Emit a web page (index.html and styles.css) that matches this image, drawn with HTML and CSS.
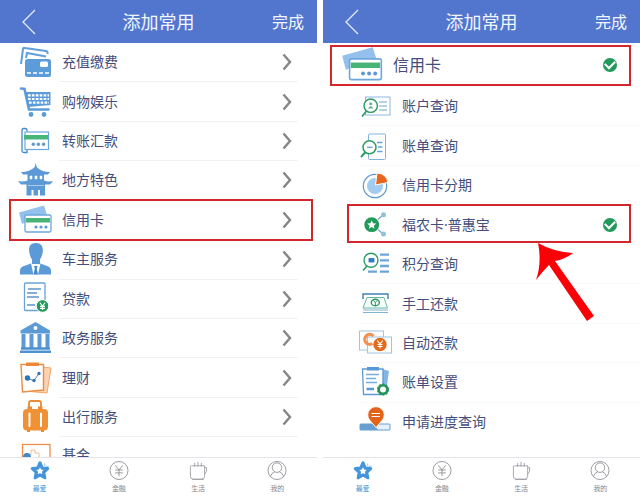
FILE: index.html
```
<!DOCTYPE html>
<html lang="zh-CN">
  <head>
    <meta charset="UTF-8" />
    <meta name="viewport" content="width=device-width, initial-scale=1.0" />
    <title>添加常用</title>
    <link rel="stylesheet" href="styles.css">
  </head>
  <body>
    <!-- shared icons -->
    <svg class="sprite" aria-hidden="true">
      <symbol id="card" viewBox="0 0 36 36">
        <path d="M1 10.500L26 3.500L29 13L6 21L4 22Z" fill="#93c0ec" />
        <rect x="7" y="13" width="26" height="17" rx="1.500" fill="#fff" stroke="#6ba6dc" stroke-width="1.300" />
        <path d="M8 16H32V20.500H8Z" fill="#48b377" />
        <g fill="#5b98d2"><circle cx="18" cy="25" r="1.600" /><circle cx="23" cy="25" r="1.600" /><circle cx="28" cy="25" r="1.600" /></g>
      </symbol>
      <symbol id="back" viewBox="0 0 14 26">
        <path d="M13 1L1 13L13 25" fill="none" stroke="#e4ecff" stroke-width="1.300" />
      </symbol>
      <symbol id="chevron" viewBox="0 0 10 18">
        <path d="M1.500 1.500L8 9L1.500 16.500" fill="none" stroke="#858585" stroke-width="2.400" />
      </symbol>
      <symbol id="star" viewBox="0 0 20 20">
        <path d="M10 2L12.300 7.400L18 8L13.800 11.900L15 17.600L10 14.700L5 17.600L6.200 11.900L2 8L7.700 7.400Z" fill="#fff" stroke="#4495db" stroke-width="3.400" stroke-linejoin="round" />
        <path d="M15 2.500V5.500M16.500 5.500H19" stroke="#8bbce8" />
      </symbol>
      <symbol id="yuan" viewBox="0 0 20 20">
        <g fill="none" stroke="#8b8b8f" stroke-width="0.900"><circle cx="10" cy="10" r="9.500" /><path d="M6 4.500L10 9.500L14 4.500M10 9.500V16M6 9.500H14M6 12.500H14" /></g>
      </symbol>
      <symbol id="cup" viewBox="0 0 20 20">
        <g fill="none" stroke="#9a9aa2" stroke-width="0.900"><path d="M3 5H17V16Q17 19 14 19H5Q2 19 2 16V6Q2 5 3 5ZM17 7H19Q20 11 17 14M4 19.500H16M6.500 2V6M10 1V6M13.500 2V6" /></g>
      </symbol>
      <symbol id="user" viewBox="0 0 20 20">
        <g fill="none" stroke="#8d8d94" stroke-width="0.900"><circle cx="10" cy="10" r="9.500" /><circle cx="10" cy="7" r="5" /><path d="M3 16.500Q4.500 12 7.500 11.500M12.500 11.500Q15.500 12 17 16.500" /></g>
      </symbol>
    </svg>

    <section class="phone">
      <header class="topbar">
        <button class="back" aria-label="返回"><svg><use href="#back" /></svg></button>
        <h1>添加常用</h1>
        <button class="done">完成</button>
      </header>
      <ul class="menu">
        <li><button class="row">
          <svg class="icon" viewBox="0 0 36 36">
            <path d="M3 20L5 5Q5.500 3.500 7 4L28 7Q30 7.500 29.500 10M8 14L9 9L28 12.500" fill="none" stroke="#5fa0da" stroke-width="2" />
            <rect x="7" y="15" width="26" height="18" rx="2.500" fill="#5c9dd9" />
            <rect x="22" y="17.500" width="8" height="5.500" rx="1.500" fill="#fff" />
            <path d="M9 29H32" stroke="#fff" stroke-width="1.500" stroke-dasharray="4 2" />
          </svg>
          <span>充值缴费</span><svg class="chevron"><use href="#chevron" /></svg>
        </button></li>
        <li><button class="row">
          <svg class="icon" viewBox="0 0 36 36">
            <path d="M3 4.500L6.500 5L11 25.500H30.500" fill="none" stroke="#5c9dd9" stroke-width="2.600" stroke-linecap="round" />
            <path d="M7 8H32.500V21L10 23Z" fill="#5c9dd9" />
            <path d="M10 11.300H31M10 15H31M11 18.700H31" stroke="#fff" stroke-width="2.200" stroke-dasharray="2.600 1.300" />
            <circle cx="13" cy="30.500" r="2.400" fill="#5c9dd9" /><circle cx="26" cy="30.500" r="2.400" fill="#5c9dd9" />
          </svg>
          <span>购物娱乐</span><svg class="chevron"><use href="#chevron" /></svg>
        </button></li>
        <li><button class="row">
          <svg class="icon" viewBox="0 0 36 36">
            <rect x="7" y="9" width="23.500" height="17.500" fill="#fff" stroke="#6aa7dc" stroke-width="1.200" />
            <path d="M6 12H30V16.500H6Z" fill="#49b57a" />
            <path d="M9 8.500V7Q9 5.500 7 5.500H5.500Q4 5.500 4 7V28Q4 29.500 6 29.500H9V27" fill="none" stroke="#4389ca" stroke-width="1.300" />
            <g fill="#6298cc"><circle cx="15.300" cy="21.300" r="1.700" /><circle cx="20.300" cy="21.300" r="1.700" /><circle cx="25.600" cy="21.300" r="1.700" /></g>
          </svg>
          <span>转账汇款</span><svg class="chevron"><use href="#chevron" /></svg>
        </button></li>
        <li><button class="row">
          <svg class="icon" viewBox="0 0 36 36">
            <path d="M17.700 1L18.700 5Q23 10 32 10L30 12.500H26V18.500Q30 20 35 19L32 22.500H27V33.500H22V28H20V33.500H15.500V28H13.500V33.500H8.500V22.500H3L0 19Q5 20 9.500 18.500V12.500H5L3 10Q12 10 16.700 5Z" fill="#5b9ad6" />
            <path d="M12 14H14V17H12ZM17 14H19V17H17ZM22 14H24V17H22ZM10 23.500H26" fill="#fff" stroke="#fff" stroke-width="0.500" />
          </svg>
          <span>地方特色</span><svg class="chevron"><use href="#chevron" /></svg>
        </button></li>
        <li class="marked"><button class="row">
          <svg class="icon"><use href="#card" /></svg>
          <span>信用卡</span><svg class="chevron"><use href="#chevron" /></svg>
        </button></li>
        <li><button class="row">
          <svg class="icon" viewBox="0 0 36 36">
            <path d="M18 2C12 2 10.500 6 11.300 11Q12 16 14 18.500V23H22V18.500Q24 16 24.700 11C25.500 6 23.500 2 18 2Z" fill="#5b9ad6" />
            <path d="M2 33.500V30Q2 26 6 25L13 22.500L17.500 27L22.500 22.500L29 25Q33 26 33 30V33.500Z" fill="#5b9ad6" />
            <path d="M13 22.500L15.500 33.500H20L22.500 22.500L18 26Z" fill="#fff" />
            <path d="M16 25H19.500L18.800 27.500L20 33.500H15.500L16.800 27.500Z" fill="#4589cb" />
          </svg>
          <span>车主服务</span><svg class="chevron"><use href="#chevron" /></svg>
        </button></li>
        <li><button class="row">
          <svg class="icon" viewBox="0 0 36 36">
            <rect x="6.500" y="2" width="20.500" height="27.500" rx="1" fill="#fff" stroke="#6ba3d8" stroke-width="1.300" />
            <path d="M10 8H23M9 12H19M9 16H21M9 24H17" stroke="#5d94cd" stroke-width="1.300" />
            <circle cx="24.500" cy="25" r="6.300" fill="#229b5b" stroke="#fff" />
            <path d="M21.800 21.500L24.500 25L27.200 21.500M24.500 25V29M22 25.300H27M22 27.300H27" fill="none" stroke="#fff" stroke-width="1.200" />
          </svg>
          <span>贷款</span><svg class="chevron"><use href="#chevron" /></svg>
        </button></li>
        <li><button class="row">
          <svg class="icon" viewBox="0 0 36 36">
            <path d="M17.500 2L32 10.500V13.500H2.500V10.500Z" fill="#5b9ad6" />
            <circle cx="17.500" cy="8" r="2" fill="#fff" />
            <path d="M5.500 14V28M13.500 14V28M21.500 14V28M29.500 14V28" stroke="#5b9ad6" stroke-width="4" />
            <path d="M3 28.500H32M2 31.800H33" stroke="#4e91d0" stroke-width="2.600" />
          </svg>
          <span>政务服务</span><svg class="chevron"><use href="#chevron" /></svg>
        </button></li>
        <li><button class="row">
          <svg class="icon" viewBox="0 0 36 36">
            <path d="M25 7L33 8L29 33L12 31.500" fill="#fbd3b2" stroke="#f3a56b" />
            <path d="M3 4.500H25.500V30L4.500 32Z" fill="#fff" stroke="#ec8c40" stroke-width="1.400" />
            <path d="M8 2.500H21V6H8Z" fill="#ee8736" />
            <path d="M9.500 18.500L16 20.500L21 13.500" fill="none" stroke="#4a86bf" />
            <g fill="#2f75b5"><circle cx="9.500" cy="18" r="2.700" /><circle cx="16" cy="20.500" r="1.700" /><circle cx="21" cy="13.500" r="1.700" /></g>
          </svg>
          <span>理财</span><svg class="chevron"><use href="#chevron" /></svg>
        </button></li>
        <li><button class="row">
          <svg class="icon" viewBox="0 0 36 36">
            <path d="M11 10V4Q11 2 13 2H21Q23 2 23 4V10" fill="none" stroke="#e98a38" stroke-width="1.800" />
            <rect x="5" y="10" width="25" height="21.500" rx="4" fill="#f19136" />
            <path d="M11.500 14.500V27M23 14.500V27" stroke="#fff" stroke-width="2" stroke-linecap="round" />
            <path d="M9.500 7.500H14V10H9.500ZM20 7.500H24.500V10H20ZM9 31H12V33H9ZM23 31H26V33H23Z" fill="#e98a38" />
          </svg>
          <span>出行服务</span><svg class="chevron"><use href="#chevron" /></svg>
        </button></li>
        <li><button class="row">
          <svg class="icon" viewBox="0 0 36 36">
            <rect x="4.500" y="7.500" width="27.500" height="22" fill="#fff" stroke="#ee8e50" stroke-width="1.300" />
            <path d="M13 18V13H17V16H21V20" fill="none" stroke="#f4bd98" />
            <circle cx="9" cy="20" r="4" fill="#4389c6" />
          </svg>
          <span>基金</span>
        </button></li>
      </ul>
      <nav class="tabbar">
        <a class="tab active" href="#"><svg><use href="#star" /></svg>最爱</a>
        <a class="tab" href="#"><svg><use href="#yuan" /></svg>金融</a>
        <a class="tab" href="#"><svg><use href="#cup" /></svg>生活</a>
        <a class="tab" href="#"><svg><use href="#user" /></svg>我的</a>
      </nav>
    </section>

    <section class="phone">
      <header class="topbar">
        <button class="back" aria-label="返回"><svg><use href="#back" /></svg></button>
        <h1>添加常用</h1>
        <button class="done">完成</button>
      </header>
      <ul class="menu submenu">
        <li class="marked"><label class="row parent">
          <svg class="icon"><use href="#card" /></svg>
          <span>信用卡</span><input type="checkbox" class="check" checked />
        </label></li>
        <li><label class="row">
          <svg class="icon" viewBox="0 0 36 36">
            <rect x="7.500" y="9" width="24.500" height="18" fill="#fff" stroke="#8bb9e2" />
            <path d="M21 14H29M21 18H29M21 22H29" stroke="#6da5d5" stroke-width="1.200" />
            <circle cx="12.700" cy="17.700" r="6.700" fill="#fff" stroke="#2b9d62" stroke-width="1.400" />
            <path d="M8.500 23L4 28.500" stroke="#2b9d62" stroke-width="1.800" />
            <circle cx="12.700" cy="15.800" r="1.500" fill="#6dae97" /><path d="M10 20.500Q12.700 16 15.500 20.500Z" fill="#6dae97" />
          </svg>
          <span>账户查询</span><input type="checkbox" class="check" />
        </label></li>
        <li><label class="row">
          <svg class="icon" viewBox="0 0 36 36">
            <rect x="10.500" y="6" width="17" height="25.500" rx="1" fill="#fff" stroke="#82b2df" />
            <path d="M19 14.500H24.500M20 19H24.500M19 23.500H24.500" stroke="#6da5d5" stroke-width="1.300" />
            <circle cx="11.500" cy="19.300" r="6.500" fill="#fff" stroke="#2b9d62" stroke-width="1.500" />
            <path d="M7.500 24L3 29" stroke="#2b9d62" stroke-width="1.900" />
            <path d="M9 19.300H14.500" stroke="#6da5d5" stroke-width="1.300" />
          </svg>
          <span>账单查询</span><input type="checkbox" class="check" />
        </label></li>
        <li><label class="row">
          <svg class="icon" viewBox="0 0 36 36">
            <circle cx="17" cy="19" r="11.700" fill="#fff" stroke="#6299cb" stroke-width="1.200" />
            <circle cx="17" cy="19" r="8" fill="#a2cbf1" />
            <path d="M17.500 18L19 6Q28.500 6.500 30 15.500Z" fill="#e8651d" stroke="#fff" />
          </svg>
          <span>信用卡分期</span><input type="checkbox" class="check" />
        </label></li>
        <li class="marked"><label class="row">
          <svg class="icon" viewBox="0 0 36 36">
            <path d="M20 12.500L25 8M20 22.500L25 27" stroke="#77aacb" stroke-width="1.200" />
            <circle cx="25.500" cy="7.800" r="2.500" fill="#8fc2dc" /><circle cx="25.500" cy="27" r="2.500" fill="#8fc2dc" />
            <circle cx="13.700" cy="17.700" r="7.400" fill="#229a59" />
            <path d="M13.700 13.300L15 16.300L18.200 16.600L15.800 18.700L16.500 21.800L13.700 20.100L10.900 21.800L11.600 18.700L9.200 16.600L12.400 16.300Z" fill="#fff" />
          </svg>
          <span>福农卡·普惠宝</span><input type="checkbox" class="check" checked />
        </label></li>
        <li><label class="row">
          <svg class="icon" viewBox="0 0 36 36">
            <path d="M22 8.700H31M22 14.300H31M22 20H31M22 25.700H31M10 25.700H19" stroke="#6da4dd" stroke-width="2.300" />
            <circle cx="13" cy="14.300" r="7" fill="#fff" stroke="#2b9d62" stroke-width="1.400" />
            <path d="M9 20L5 24.500" stroke="#2b9d62" stroke-width="1.600" />
            <rect x="10.500" y="12" width="6" height="4.500" rx="1" fill="#347ec1" />
          </svg>
          <span>积分查询</span><input type="checkbox" class="check" />
        </label></li>
        <li><label class="row">
          <svg class="icon" viewBox="0 0 36 36">
            <path d="M5 13V8H30V13" fill="none" stroke="#4180b5" stroke-width="1.400" />
            <path d="M9 11.500H26L29.500 22H5Z" fill="#f5fffb" stroke="#67b7a4" />
            <path d="M5 24H30M5 26.500H30" stroke="#7eb3d2" stroke-width="1.200" />
            <ellipse cx="17.300" cy="16.500" rx="4" ry="3.300" fill="#fff" stroke="#2b9464" stroke-width="1.400" />
            <path d="M15.500 14.500L17.300 16.500L19 14.500M17.300 16.500V19" fill="none" stroke="#2b9464" />
          </svg>
          <span>手工还款</span><input type="checkbox" class="check" />
        </label></li>
        <li><label class="row">
          <svg class="icon" viewBox="0 0 36 36">
            <rect x="1.500" y="6" width="24" height="19" fill="#fff" stroke="#9fc4e4" />
            <rect x="9.500" y="12" width="24" height="16" fill="#fff" stroke="#9fc4e4" />
            <path d="M15.500 11A5 5 0 1 0 14.500 18.500" fill="none" stroke="#f19151" stroke-width="3.200" />
            <circle cx="22" cy="19.500" r="6.700" fill="#e36a1c" />
            <path d="M19.300 15.500L22 19L24.700 15.500M22 19V23.500M19.500 19.500H24.500M19.500 21.500H24.500" fill="none" stroke="#fff" stroke-width="1.100" />
          </svg>
          <span>自动还款</span><input type="checkbox" class="check" />
        </label></li>
        <li><label class="row">
          <svg class="icon" viewBox="0 0 36 36">
            <path d="M24 5L31 7L28 28L23 27Z" fill="#82b6e6" />
            <path d="M4.500 5H25V30.500H5.500Z" fill="#fff" stroke="#5d9bd3" stroke-width="1.300" />
            <path d="M9 3H21V6.500H9Z" fill="#5898d4" />
            <path d="M8 10.500H21M8 14.500H18M8 18.500H19" stroke="#78acd9" stroke-width="1.300" /><path d="M8.500 25H16" stroke="#5898d4" stroke-width="2.500" />
            <circle cx="25" cy="25.500" r="4.300" fill="#fff" stroke="#239457" stroke-width="2.600" />
            <circle cx="25" cy="25.500" r="5.500" fill="none" stroke="#239457" stroke-width="1.200" stroke-dasharray="2 1.500" />
          </svg>
          <span>账单设置</span><input type="checkbox" class="check" />
        </label></li>
        <li><label class="row">
          <svg class="icon" viewBox="0 0 36 36">
            <rect x="1.500" y="19.500" width="31" height="7" rx="1.500" fill="#689fd2" />
            <path d="M15 20.500H31.500V25.500H20Z" fill="#e5f1fc" />
            <path d="M18 23.500L12 16.500A8.200 8.200 0 1 1 24 16.500Z" fill="#e26319" stroke="#fff" stroke-width="0.800" />
            <path d="M13.500 9.500H22M13.500 12.500H22" stroke="#fff" stroke-width="1.200" />
          </svg>
          <span>申请进度查询</span><input type="checkbox" class="check" />
        </label></li>
      </ul>
      <nav class="tabbar">
        <a class="tab active" href="#"><svg><use href="#star" /></svg>最爱</a>
        <a class="tab" href="#"><svg><use href="#yuan" /></svg>金融</a>
        <a class="tab" href="#"><svg><use href="#cup" /></svg>生活</a>
        <a class="tab" href="#"><svg><use href="#user" /></svg>我的</a>
      </nav>
      <!-- arrow pointing at the second marked row -->
      <svg class="pointer" viewBox="0 0 60 80" aria-hidden="true">
        <path d="M2 0Q18 9 37 10Q30 16 19 18L58 73L51 78L13 22Q7 28 0 37Q6 20 2 0Z" fill="#fb0007" />
      </svg>
    </section>
  </body>
</html>
```
FILE: styles.css
```
* {
  box-sizing: border-box;
}

body {
  font-family: "Noto Sans", "Noto Sans CJK SC", sans-serif;
  margin: 0;
  height: 100vh;
  display: flex;
  gap: 6px;
  background-color: #fff;
  color: #444e7c;
}

button {
  border: none;
  background: none;
  padding: 0;
  font: inherit;
  color: inherit;
  cursor: pointer;
}

.sprite {
  position: absolute;
  width: 0;
  height: 0;
}

.phone {
  flex: 1;
  display: flex;
  flex-direction: column;
  position: relative;
  min-width: 0;
}

.topbar {
  height: 43px;
  display: grid;
  grid-template-columns: 1fr auto 1fr;
  align-items: center;
  padding: 0 13px;
  background-color: #5276ce;
  color: #f2f6ff;
}

.topbar h1 {
  margin: 0;
  font-size: 18px;
  font-weight: 400;
  line-height: 24px;
}

.back {
  justify-self: start;
  display: flex;
  padding-left: 9px;
}

.back svg {
  width: 14px;
  height: 26px;
}

.done {
  justify-self: end;
  font-size: 16px;
  line-height: 24px;
}

.menu {
  flex: 1;
  min-height: 0;
  margin: 0;
  padding: 0;
  list-style: none;
  display: grid;
  grid-template-rows: repeat(10, minmax(0, 2fr)) minmax(0, 1fr);
}

.menu li {
  position: relative;
  border-bottom: 1px solid transparent;
  border-image: linear-gradient(to right, transparent 60px, #f2f0f5 60px, #f2f0f5 calc(100% - 20px), transparent 0) 1;
}

.menu li:last-child {
  border: none;
  overflow: hidden;
}

.row {
  width: 100%;
  height: 100%;
  min-height: 36px;
  display: flex;
  align-items: center;
  gap: 8px;
  padding: 0 25px 0 18px;
  font-size: 14px;
  line-height: 20px;
  text-align: left;
}

.row span {
  flex: 1;
}

.icon {
  width: 36px;
  height: 36px;
  flex-shrink: 0;
}

.chevron {
  width: 10px;
  height: 18px;
}

.submenu {
  grid-template-rows: 44px repeat(9, minmax(0, 8fr)) minmax(0, 3fr);
}

.submenu li {
  border-image: linear-gradient(to right, transparent 36px, #f9f8fb 36px) 1;
}

.submenu .row {
  padding: 0 23px 0 35px;
}

.submenu .parent {
  padding-left: 18px;
  font-size: 16px;
}

.parent .icon {
  width: 44px;
  height: 44px;
}

/* red frame over the highlighted rows */
.marked::after {
  content: "";
  position: absolute;
  inset: -2px 4px -2px 9px;
  border: 2px solid #d3262d;
  pointer-events: none;
}

.submenu .marked::after {
  inset: -1px 9px 1px 24px;
}

.submenu .marked:first-child::after {
  inset: 2px 9px 0 7px;
}

.check {
  appearance: none;
  width: 14px;
  height: 14px;
  margin: 0;
  border-radius: 50%;
  display: grid;
  place-items: center;
}

.check:checked {
  background-color: #229a5b;
}

.check:checked::after {
  content: "";
  width: 8px;
  height: 5px;
  border-left: 2px solid #fff;
  border-bottom: 2px solid #fff;
  transform: translateY(-1px) rotate(-45deg);
}

.tabbar {
  height: 41px;
  display: flex;
  border-top: 1px solid #e6e4ea;
  background-color: #fff;
  position: relative;
}

.tab {
  flex: 1;
  display: flex;
  flex-direction: column;
  align-items: center;
  padding-top: 3px;
  font-size: 7px;
  line-height: 18px;
  color: #85858c;
  text-decoration: none;
}

.tab svg {
  width: 20px;
  height: 20px;
}

.tab.active {
  color: #4794d6;
}

.pointer {
  position: absolute;
  top: 243px;
  right: 44px;
  width: 60px;
  height: 80px;
}
```
